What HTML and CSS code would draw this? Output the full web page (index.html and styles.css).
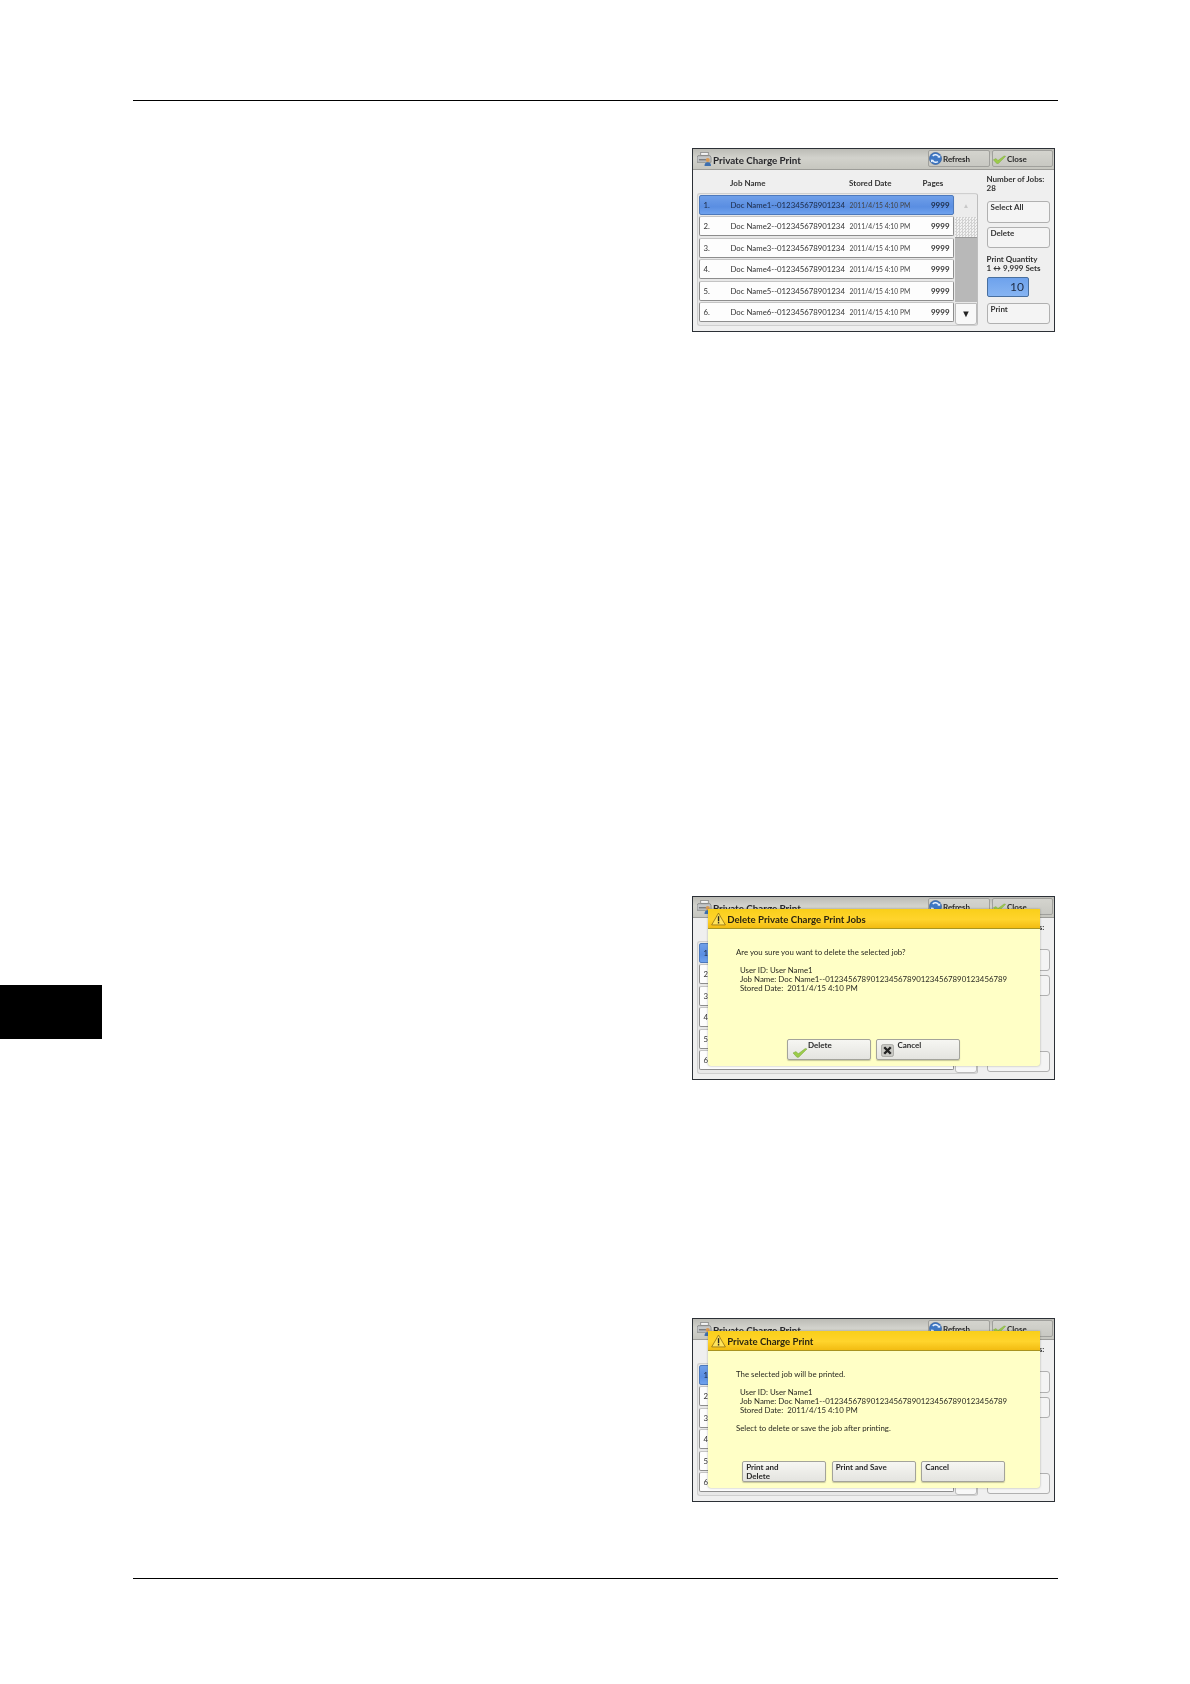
FILE: index.html
```html
<!DOCTYPE html>
<html lang="en">
<head>
<meta charset="utf-8">
<title>Private Charge Print</title>
<link rel="stylesheet" href="styles.css">
</head>
<body>
<svg class="defs" width="0" height="0" aria-hidden="true">
  <defs>
    <symbol id="printer" viewBox="0 0 16 15">
      <rect x="4" y="0.5" width="8" height="3" fill="#f4f4f4" stroke="#777" stroke-width=".7"/>
      <path d="M1 4h13l1 2v5H0V6z" fill="#c4c6c8" stroke="#6e7072" stroke-width=".7"/>
      <rect x="2" y="7.5" width="10" height="1.6" fill="#7b7d80"/>
      <circle cx="11.5" cy="8.6" r="2.2" fill="#d99a55"/>
      <path d="M8 15c0-3 1.500-4 3.500-4s3.500 1 3.500 4z" fill="#3c6fb0"/>
    </symbol>
    <symbol id="refresh" viewBox="0 0 14 14">
      <circle cx="7" cy="7" r="6.500" fill="#3f78c4" stroke="#28508c" stroke-width=".6"/>
      <path d="M10.500 5.200A4 4 0 0 0 4 4.200M3.500 8.500A4 4 0 0 0 9.500 10.300" fill="none" stroke="#e8f2ff" stroke-width="1.500"/>
      <path d="M9 6l3 .3.200-3zM5.500 8.500l-3.500-.5.200 3.300z" fill="#e8f2ff"/>
    </symbol>
    <symbol id="check" viewBox="0 0 16 13">
      <path d="M0 7.500l3.500-1.500 2.500 2.500 8-6 2 .5-9.500 9.500h-2z" fill="#9ccc4a" stroke="#6b9c2c" stroke-width=".5"/>
    </symbol>
    <symbol id="cross" viewBox="0 0 14 14">
      <rect x=".5" y=".5" width="13" height="13" rx="2" fill="#c9c9c4" stroke="#8a8a86" stroke-width=".6"/>
      <path d="M3.500 3.500l7 7M10.500 3.500l-7 7" stroke="#222" stroke-width="2.600" fill="none"/>
    </symbol>
    <symbol id="warn" viewBox="0 0 16 14">
      <path d="M8 .7l7.300 12.600H.7z" fill="#ffe45c" stroke="#8a6a10" stroke-width=".8" stroke-linejoin="round"/>
      <rect x="7.300" y="4" width="1.500" height="5.500" fill="#222"/>
      <rect x="7.300" y="10.300" width="1.500" height="1.500" fill="#222"/>
    </symbol>
  </defs>
</svg>

<div class="page">
  <div class="rule"></div>

  <section class="row row-first">
    <div class="screen">
      <div class="titlebar">
        <svg class="ico-printer"><use href="#printer"/></svg>
        <span class="title">Private Charge Print</span>
        <button class="top-btn top-btn-refresh"><svg class="ico-refresh"><use href="#refresh"/></svg>Refresh</button>
        <button class="top-btn"><svg class="ico-check-sm"><use href="#check"/></svg>Close</button>
      </div>
      <div class="content">
        <div class="left">
          <div class="cols"><span class="col-name">Job Name</span><span class="col-date">Stored Date</span><span class="col-pages">Pages</span></div>
          <div class="listbox">
            <div class="rows">
              <div class="job job-on"><span>1.</span><span>Doc Name1--012345678901234</span><span class="date">2011/4/15 4:10 PM</span><span class="pages">9999</span></div>
              <div class="job"><span>2.</span><span>Doc Name2--012345678901234</span><span class="date">2011/4/15 4:10 PM</span><span class="pages">9999</span></div>
              <div class="job"><span>3.</span><span>Doc Name3--012345678901234</span><span class="date">2011/4/15 4:10 PM</span><span class="pages">9999</span></div>
              <div class="job"><span>4.</span><span>Doc Name4--012345678901234</span><span class="date">2011/4/15 4:10 PM</span><span class="pages">9999</span></div>
              <div class="job"><span>5.</span><span>Doc Name5--012345678901234</span><span class="date">2011/4/15 4:10 PM</span><span class="pages">9999</span></div>
              <div class="job"><span>6.</span><span>Doc Name6--012345678901234</span><span class="date">2011/4/15 4:10 PM</span><span class="pages">9999</span></div>
            </div>
            <div class="scroll">
              <div class="scroll-up">▲</div>
              <div class="scroll-thumb"></div>
              <div class="scroll-track"></div>
              <div class="scroll-down">▼</div>
            </div>
          </div>
        </div>
        <div class="side">
          <div class="side-text">Number of Jobs:<br>28</div>
          <button class="side-btn side-btn-a">Select All</button>
          <button class="side-btn side-btn-b">Delete</button>
          <div class="side-text side-qty">Print Quantity<br>1 ↔ 9,999 Sets</div>
          <div class="qty-box">10</div>
          <button class="side-btn side-btn-c">Print</button>
        </div>
      </div>
    </div>
  </section>

  <section class="row row-second">
    <div class="black-tab"></div>
    <div class="screen">
      <div class="titlebar">
        <svg class="ico-printer"><use href="#printer"/></svg>
        <span class="title">Private Charge Print</span>
        <button class="top-btn top-btn-refresh"><svg class="ico-refresh"><use href="#refresh"/></svg>Refresh</button>
        <button class="top-btn"><svg class="ico-check-sm"><use href="#check"/></svg>Close</button>
      </div>
      <div class="content">
        <div class="left">
          <div class="cols"></div>
          <div class="listbox">
            <div class="rows">
              <div class="job job-on"><span>1.</span></div>
              <div class="job"><span>2.</span></div>
              <div class="job"><span>3.</span></div>
              <div class="job"><span>4.</span></div>
              <div class="job"><span>5.</span></div>
              <div class="job"><span>6.</span></div>
            </div>
            <div class="scroll">
              <div class="scroll-up"></div>
              <div class="scroll-thumb"></div>
              <div class="scroll-track"></div>
              <div class="scroll-down"></div>
            </div>
          </div>
        </div>
        <div class="side">
          <div class="side-text">Number of Jobs:<br>28</div>
          <button class="side-btn side-btn-a"></button>
          <button class="side-btn side-btn-b"></button>
          <div class="side-text side-qty"><br></div>
          <div class="qty-box"></div>
          <button class="side-btn side-btn-c"></button>
        </div>
      </div>
      <div class="dialog">
        <div class="dialog-title"><svg class="ico-warn"><use href="#warn"/></svg>Delete Private Charge Print Jobs</div>
        <div class="dialog-body">
          <p>Are you sure you want to delete the selected job?</p>
          <p class="info">User ID: User Name1<br>Job Name: Doc Name1--0123456789012345678901234567890123456789<br>Stored Date:&nbsp; 2011/4/15 4:10 PM</p>
        </div>
        <div class="dialog-btns">
          <button class="dlg-btn"><svg class="ico-check"><use href="#check"/></svg>Delete</button>
          <button class="dlg-btn"><svg class="ico-cross"><use href="#cross"/></svg>Cancel</button>
        </div>
      </div>
    </div>
  </section>

  <section class="row row-third">
    <div class="screen">
      <div class="titlebar">
        <svg class="ico-printer"><use href="#printer"/></svg>
        <span class="title">Private Charge Print</span>
        <button class="top-btn top-btn-refresh"><svg class="ico-refresh"><use href="#refresh"/></svg>Refresh</button>
        <button class="top-btn"><svg class="ico-check-sm"><use href="#check"/></svg>Close</button>
      </div>
      <div class="content">
        <div class="left">
          <div class="cols"></div>
          <div class="listbox">
            <div class="rows">
              <div class="job job-on"><span>1.</span></div>
              <div class="job"><span>2.</span></div>
              <div class="job"><span>3.</span></div>
              <div class="job"><span>4.</span></div>
              <div class="job"><span>5.</span></div>
              <div class="job"><span>6.</span></div>
            </div>
            <div class="scroll">
              <div class="scroll-up"></div>
              <div class="scroll-thumb"></div>
              <div class="scroll-track"></div>
              <div class="scroll-down"></div>
            </div>
          </div>
        </div>
        <div class="side">
          <div class="side-text">Number of Jobs:<br>28</div>
          <button class="side-btn side-btn-a"></button>
          <button class="side-btn side-btn-b"></button>
          <div class="side-text side-qty"><br></div>
          <div class="qty-box"></div>
          <button class="side-btn side-btn-c"></button>
        </div>
      </div>
      <div class="dialog">
        <div class="dialog-title"><svg class="ico-warn"><use href="#warn"/></svg>Private Charge Print</div>
        <div class="dialog-body">
          <p>The selected job will be printed.</p>
          <p class="info">User ID: User Name1<br>Job Name: Doc Name1--0123456789012345678901234567890123456789<br>Stored Date:&nbsp; 2011/4/15 4:10 PM</p>
          <p class="after">Select to delete or save the job after printing.</p>
        </div>
        <div class="dialog-btns">
          <button class="dlg-btn">Print and<br>Delete</button>
          <button class="dlg-btn">Print and Save</button>
          <button class="dlg-btn">Cancel</button>
        </div>
      </div>
    </div>
  </section>

  <div class="rule rule-bottom"></div>
</div>
</body>
</html>
```

FILE: styles.css
```css
* { box-sizing: border-box; }
html, body { margin: 0; padding: 0; background: #fff; }
.defs { display: block; height: 0; }
.page {
  width: 1190px;
  height: 1684px;
  padding-top: 100px;
  overflow: hidden;
  font-family: Lato, "Noto Sans", sans-serif;
  color: #222;
}
.rule { height: 1.4px; width: 925px; margin-left: 133px; background: #000; }
.rule-bottom { margin-top: 76px; }
.row { display: flex; justify-content: flex-end; padding-right: 135px; position: relative; }
.row-first { margin-top: 46.6px; }
.row-second { margin-top: 564px; justify-content: space-between; }
.row-third { margin-top: 238px; }
.black-tab { width: 102px; height: 54px; margin-top: 89px; background: #000; }

.screen {
  position: relative;
  width: 363px;
  height: 184px;
  border: 1px solid #2c3036;
  background: #efefef;
  display: flex;
  flex-direction: column;
  filter: blur(.4px);
}
.titlebar {
  display: flex;
  align-items: center;
  height: 21px;
  flex: none;
  padding: 0 1px 0 4px;
  background: linear-gradient(#bcbcb6, #d2d2cc 45%, #c6c6bf);
  border-bottom: 1px solid #9c9c98;
}
.ico-printer { width: 15px; height: 14px; flex: none; }
.title { margin-left: 1px; padding-top: 2px; font-size: 9.800px; font-weight: 700; color: #26262a; flex: 1; }
.top-btn {
  display: flex;
  align-items: center;
  width: 61px;
  height: 17px;
  margin-left: 2px;
  padding: 0;
  border: 1px solid #a0a09c;
  border-radius: 2px;
  background: linear-gradient(#d4d4ce, #c8c8c2);
  font: 700 8px Lato, sans-serif;
  color: #2a2a2a;
}
.top-btn-refresh { width: 62px; }
.ico-refresh { width: 13px; height: 13px; margin-right: 1px; flex: none; }
.ico-check-sm { width: 13px; height: 10px; margin-right: 1px; flex: none; }

.content { display: flex; flex: 1; padding-left: 4px; }
.left { width: 281px; flex: none; }
.cols { display: flex; height: 23.500px; align-items: center; padding-top: 3px; font-size: 8px; font-weight: 700; color: #333; }
.col-name { margin-left: 33px; width: 119px; }
.col-date { width: 73.500px; }
.listbox {
  display: flex;
  height: 132.500px;
  padding: .5px 0 0 1px;
  background: #e8e8e8;
  border: 1px solid #cfcfcf;
  border-right-color: #bdbdbd;
  border-radius: 3px;
}
.rows { width: 255px; display: flex; flex-direction: column; gap: 1.500px; }
.job {
  display: grid;
  grid-template-columns: 27px 119px 1fr auto;
  align-items: center;
  height: 20px;
  padding: 0 3px 0 3.500px;
  background: #fdfdfd;
  border: 1px solid #8d8d8d;
  border-top-color: #c4c4c4;
  border-radius: 2px;
  font-size: 7.800px;
  color: #333;
}
.job-on { background: linear-gradient(#6f9fe9, #5a8ee2 60%, #6fa2ee); border-color: #4d79bc; color: #1c2a44; }
.date { font-size: 6.750px; color: #444; }
.pages { font-weight: 700; font-size: 8px; }
.scroll { width: 22px; margin-left: 1.500px; display: flex; flex-direction: column; font-size: 9.500px; text-align: center; }
.scroll-up { height: 22px; line-height: 21px; color: #c8c8c8; background: #ececec; font-size: 6.500px; }
.scroll-thumb {
  height: 21px;
  background: #e4e4e4 repeating-conic-gradient(#d2d2d2 0 25%, #f2f2f2 0 50%) 0 0 / 3px 3px;
  border-bottom: 1px solid #9a9a9a;
}
.scroll-track { flex: 1; background: #b8b8b8; height: 64px; }
.scroll-down { height: 21.500px; margin-top: 1px; line-height: 20px; color: #222; background: #f8f8f8; border: 1px solid #bbb; border-radius: 0 0 3px 3px; }

.side { margin-left: 8.500px; width: 65px; display: flex; flex-direction: column; padding-top: 5px; }
.side-text { font-size: 8px; line-height: 9.300px; font-weight: 700; color: #333; height: 18.600px; white-space: nowrap; }
.side-btn {
  display: flex;
  align-items: flex-start;
  width: 63px;
  padding: 0 0 0 3px;
  border: 1px solid #b0b0b0;
  border-radius: 3px;
  background: #f4f4f4;
  font: 700 8px/10px Lato, sans-serif;
  color: #333;
}
.side-btn-a { height: 22.500px; margin-top: 7px; }
.side-btn-b { height: 21px; margin-top: 4px; }
.side-qty { margin-top: 6.500px; }
.qty-box {
  width: 42px;
  height: 20px;
  margin: 3.500px 0 0 .5px;
  padding-right: 4px;
  border: 1px solid #486f9f;
  border-radius: 2px;
  background: linear-gradient(#6ea2ec, #86b4f2);
  font-size: 12px;
  line-height: 18px;
  text-align: right;
  color: #1d2b44;
}
.side-btn-c { height: 21px; margin-top: 6.500px; }

.dialog {
  position: absolute;
  left: 14.700px;
  top: 12px;
  width: 332px;
  height: 157px;
  display: flex;
  flex-direction: column;
  background: #ffffc6;
  border-radius: 0 0 3px 3px;
  box-shadow: 0 0 2px rgba(80, 80, 60, .5);
}
.dialog-title {
  display: flex;
  align-items: center;
  height: 20.500px;
  padding-left: 3px;
  background: linear-gradient(#f9cf1a, #ffd42c 55%, #f2bc12);
  border-bottom: 1px solid #a89420;
  font-size: 9.650px;
  font-weight: 700;
  color: #2a2410;
  padding-top: 1px;
}
.ico-warn { width: 15px; height: 14px; margin-right: 1.500px; flex: none; }
.dialog-body { padding: 19px 0 0 28.300px; font-size: 7.850px; line-height: 9.300px; color: #2a2a22; white-space: nowrap; flex: 1; }
.dialog-body p { margin: 0; }
.dialog-body .info { margin: 8px 0 0 4px; }
.dialog-body .after { margin-top: 8.500px; }
.dialog-btns { display: flex; justify-content: center; gap: 5.500px; padding-bottom: 5.500px; }
.dlg-btn {
  display: flex;
  align-items: flex-start;
  width: 84px;
  height: 21.500px;
  padding: 1px 0 0 3px;
  border: 1px solid #a3a39b;
  border-radius: 2px;
  background: linear-gradient(#f6f6f2, #e4e4e0);
  box-shadow: 0 1px 1px rgba(120, 120, 90, .4);
  font: 700 8px/9px Lato, sans-serif;
  color: #2a2a2a;
  text-align: left;
}
.ico-check { width: 14px; height: 12px; margin: 5px 1px 0 2px; flex: none; }
.ico-cross { width: 13px; height: 13px; margin: 3px 3px 0 1px; flex: none; }
```
